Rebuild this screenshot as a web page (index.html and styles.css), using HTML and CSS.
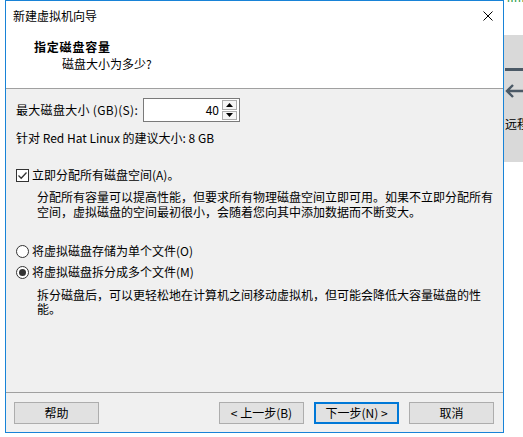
FILE: index.html
```html
<!DOCTYPE html>
<html lang="zh-CN">
<head>
<meta charset="utf-8">
<link rel="stylesheet" href="styles.css">
</head>
<body>
<div class="screen">
  <div class="gutter"></div>
  <div class="window">
    <div class="titlebar">
      <span class="title">新建虚拟机向导</span>
      <svg class="close" width="10" height="10" viewBox="0 0 10 10"><path d="M0.5 0.5 L9.5 9.5 M9.5 0.5 L0.5 9.5" stroke="#000" stroke-width="1" fill="none"/></svg>
    </div>
    <div class="header">
      <div class="h-title">指定磁盘容量</div>
      <div class="h-sub">磁盘大小为多少?</div>
    </div>
    <div class="sep"></div>
    <div class="body">
      <div class="spin-row">
        <span class="spin-label">最大磁盘大小 (GB)(S):</span>
        <div class="spin">
          <span class="spin-val">40</span>
          <div class="spin-btns">
            <div class="sb"><svg width="7" height="4" viewBox="0 0 7 4"><path d="M0 4 L3.5 0 L7 4 Z" fill="#000"/></svg></div>
            <div class="sb"><svg width="7" height="4" viewBox="0 0 7 4"><path d="M0 0 L3.5 4 L7 0 Z" fill="#000"/></svg></div>
          </div>
        </div>
      </div>
      <div class="rec">针对 Red Hat Linux 的建议大小: 8 GB</div>
      <div class="check-row">
        <span class="checkbox"><svg width="11" height="11" viewBox="0 0 11 11"><path d="M1.5 5.5 L4.2 8.2 L9.5 2.5" stroke="#333" stroke-width="1.3" fill="none"/></svg></span>
        <span>立即分配所有磁盘空间(A)。</span>
      </div>
      <div class="desc d1">分配所有容量可以提高性能，但要求所有物理磁盘空间立即可用。如果不立即分配所有<br>空间，虚拟磁盘的空间最初很小，会随着您向其中添加数据而不断变大。</div>
      <div class="radio-row r1"><span class="radio"></span><span>将虚拟磁盘存储为单个文件(O)</span></div>
      <div class="radio-row r2"><span class="radio on"></span><span>将虚拟磁盘拆分成多个文件(M)</span></div>
      <div class="desc d2">拆分磁盘后，可以更轻松地在计算机之间移动虚拟机，但可能会降低大容量磁盘的性<br>能。</div>
    </div>
    <div class="sep"></div>
    <div class="footer">
      <div class="btn">帮助</div>
      <div class="spacer"></div>
      <div class="btn">&lt; 上一步(B)</div>
      <div class="btn default">下一步(N) &gt;</div>
      <div class="btn">取消</div>
    </div>
  </div>
  <div class="side">
    <div class="side-top"><span class="side-green">ⅢⅢ</span></div>
    <div class="side-grey">
      <div class="side-bar"></div>
      <svg class="side-arrow" width="18" height="14" viewBox="0 0 18 14"><path d="M18 7 H2 M8 1 L2 7 L8 13" stroke="#4b5966" stroke-width="2.4" fill="none"/></svg>
      <div class="side-text">远程</div>
    </div>
  </div>
</div>
</body>
</html>
```
FILE: styles.css
```css
html, body {
  margin: 0;
  padding: 0;
  background: #ffffff;
}
body {
  font-family: "Noto Sans CJK SC", "Noto Sans", sans-serif;
  font-size: 12px;
  color: #000;
}
.screen {
  display: flex;
  width: 523px;
  height: 437px;
  overflow: hidden;
}
.gutter {
  width: 5px;
  flex: none;
}
.window {
  width: 497px;
  height: 431px;
  border: 1px solid #1883d7;
  flex: none;
  display: flex;
  flex-direction: column;
  background: #fff;
}
.titlebar {
  height: 30px;
  display: flex;
  align-items: center;
  padding-left: 7px;
  padding-right: 10px;
  flex: none;
}
.title {
  flex: 1;
  line-height: 16px;
}
.close {
  display: block;
}
.header {
  height: 57px;
  flex: none;
  padding-top: 8px;
  box-sizing: border-box;
}
.h-title {
  font-weight: bold;
  line-height: 16px;
  padding-left: 28px;
  letter-spacing: 0.8px;
}
.h-sub {
  line-height: 16px;
  padding-left: 56px;
  padding-top: 1px;
}
.sep {
  height: 1px;
  background: #a0a0a0;
  flex: none;
}
.body {
  height: 303px;
  flex: none;
  background: #f0f0f0;
  padding: 9px 10px 0 10px;
  box-sizing: border-box;
}
.spin-row {
  display: flex;
  align-items: center;
  height: 24px;
}
.spin-label {
  width: 127px;
  line-height: 16px;
  letter-spacing: 0.3px;
  white-space: nowrap;
}
.spin {
  width: 97px;
  height: 24px;
  box-sizing: border-box;
  border: 1px solid #7a7a7a;
  background: #fff;
  display: flex;
  align-items: center;
  padding: 1px 2px 1px 0;
}
.spin-val {
  flex: 1;
  text-align: right;
  padding-right: 3px;
  line-height: 16px;
}
.spin-btns {
  width: 15px;
  height: 20px;
  display: flex;
  flex-direction: column;
  gap: 1px;
}
.sb {
  flex: 1;
  border: 1px solid #acacac;
  background: #f5f5f5;
  display: flex;
  align-items: center;
  justify-content: center;
}
.sb svg {
  display: block;
}
.rec {
  margin-top: 8px;
  line-height: 16px;
}
.check-row, .radio-row {
  display: flex;
  align-items: center;
  height: 16px;
  line-height: 16px;
}
.check-row {
  margin-top: 21px;
}
.checkbox {
  width: 13px;
  height: 13px;
  box-sizing: border-box;
  border: 1px solid #333;
  background: #fff;
  display: flex;
  align-items: center;
  justify-content: center;
  margin-right: 3px;
  flex: none;
}
.checkbox svg {
  display: block;
}
.desc {
  padding-left: 21px;
}
.d1 {
  margin-top: 6px;
  line-height: 15px;
}
.radio-row.r1 {
  margin-top: 24px;
}
.radio-row.r2 {
  margin-top: 5px;
}
.radio {
  width: 13px;
  height: 13px;
  box-sizing: border-box;
  border: 1px solid #333;
  border-radius: 50%;
  background: #fff;
  margin-right: 3px;
  flex: none;
  display: flex;
  align-items: center;
  justify-content: center;
}
.radio.on::after {
  content: "";
  width: 7px;
  height: 7px;
  border-radius: 50%;
  background: #333;
}
.d2 {
  margin-top: 8px;
  line-height: 14px;
}
.footer {
  height: 39px;
  flex: none;
  background: #f0f0f0;
  display: flex;
  align-items: flex-start;
  padding: 9px 9px 0 8px;
  box-sizing: border-box;
  gap: 10px;
}
.spacer {
  flex: 1;
}
.btn {
  width: 85px;
  height: 22px;
  box-sizing: border-box;
  border: 1px solid #adadad;
  background: #e1e1e1;
  display: flex;
  align-items: center;
  justify-content: center;
  line-height: 16px;
}
.btn.default {
  border: 2px solid #0078d7;
}
.side {
  flex: 1;
  display: flex;
  flex-direction: column;
  overflow: hidden;
}
.side-top {
  height: 35px;
  flex: none;
  overflow: hidden;
}
.side-green {
  display: block;
  color: #2e9e4a;
  font-size: 12px;
  line-height: 12px;
  margin-top: -9px;
  padding-left: 2px;
  letter-spacing: -1px;
}
.side-grey {
  height: 127px;
  flex: none;
  background: #d9d9d9;
  display: flex;
  flex-direction: column;
  overflow: hidden;
}
.side-bar {
  height: 3px;
  background: #4b5966;
  margin-top: 33px;
  margin-left: 1px;
}
.side-arrow {
  display: block;
  margin-top: 13px;
  margin-left: 1px;
}
.side-text {
  margin-top: 18px;
  line-height: 16px;
  white-space: nowrap;
  margin-left: 1px;
}
```
